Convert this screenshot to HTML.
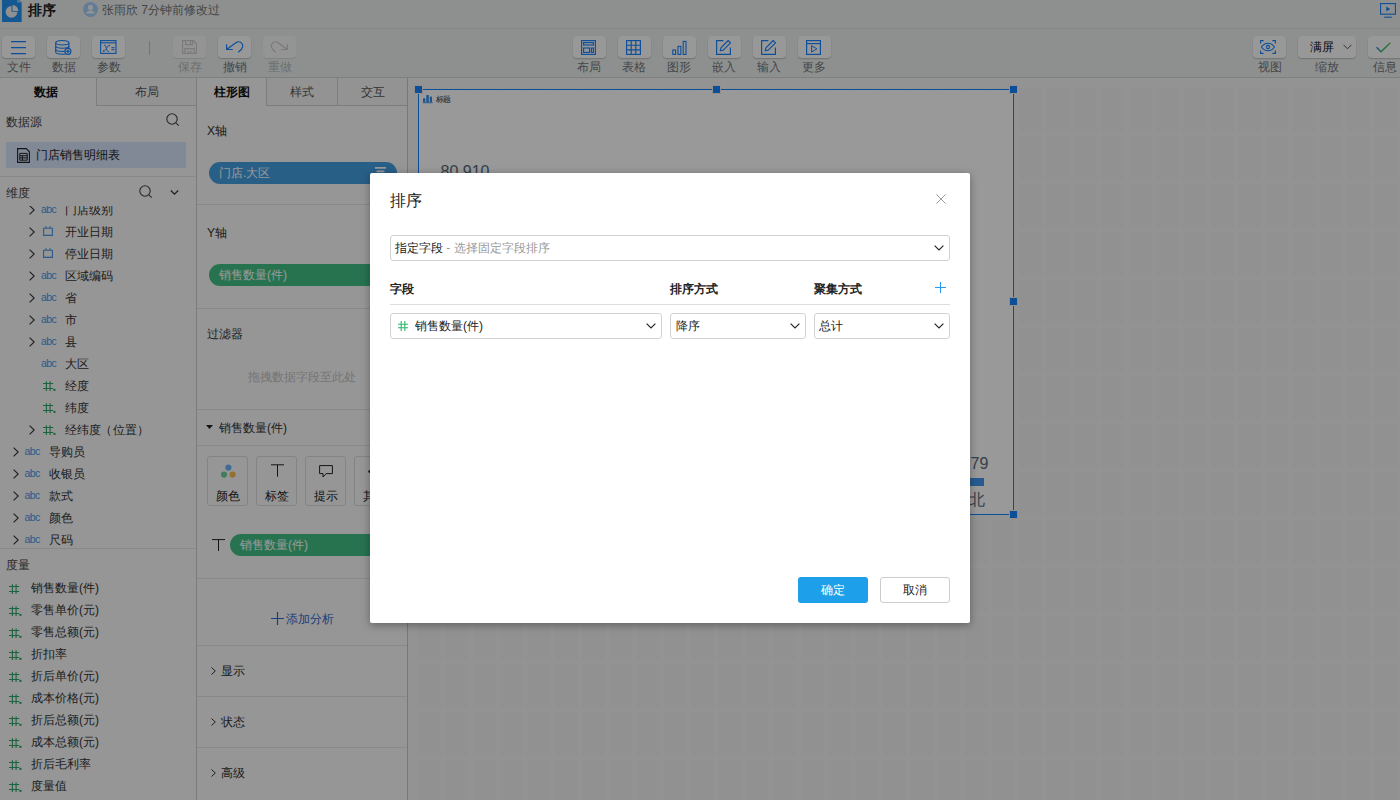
<!DOCTYPE html>
<html lang="zh">
<head>
<meta charset="utf-8">
<title>排序</title>
<style>
*{box-sizing:border-box;margin:0;padding:0}
html,body{width:1400px;height:800px;overflow:hidden}
body{font-family:"Liberation Sans",sans-serif;font-size:12px;color:#333;background:#f0f0f0;position:relative}
.abs{position:absolute}
svg{display:block;overflow:visible}
/* ---------- title bar ---------- */
#titlebar{position:absolute;left:0;top:0;width:1400px;height:29px;background:#edf1f0;border-bottom:1px solid #dadedd}
#title{position:absolute;left:28px;top:1px;font-size:14px;font-weight:bold;color:#222;line-height:18px}
#who{position:absolute;left:102px;top:1px;font-size:12px;color:#727272;line-height:18px}
/* ---------- toolbar ---------- */
#toolbar{position:absolute;left:0;top:29px;width:1400px;height:49px;background:#edf1f0;border-bottom:1px solid #d3d6d5}
.tb{position:absolute;top:7px;width:33px;height:22px;background:#fdfdfd;border-radius:4px;box-shadow:0 1px 1.5px rgba(0,0,0,.22)}
.tb.dis{background:#f5f7f6;box-shadow:0 1px 1px rgba(0,0,0,.10)}
.tb svg{position:absolute;left:9px;top:4px}
.tl{position:absolute;top:31px;width:45px;text-align:center;font-size:12px;line-height:14px;color:#757575}
.tl.dis{color:#b6b8b7}
/* ---------- panels ---------- */
#left{position:absolute;left:0;top:78px;width:197px;height:722px;background:#fafafa;border-right:1px solid #cfcfcf;overflow:hidden}
#mid{position:absolute;left:197px;top:78px;width:211px;height:722px;background:#fafafa;border-right:1px solid #c9c9c9;overflow:hidden}
.tab{position:absolute;top:0;height:28px;line-height:28px;text-align:center;font-size:12px;color:#555;background:#f6f6f6;border-bottom:1px solid #d0d0d0;border-left:1px solid #d0d0d0}
.tab.on{background:#fafafa;border-bottom:none;border-left:none;color:#111;font-weight:bold}
.hline{position:absolute;left:0;height:1px;background:#e4e4e4;width:100%}
.lbl{position:absolute;font-size:12px;line-height:16px;color:#333;white-space:nowrap}
.row{position:absolute;left:0;width:196px;height:22px;line-height:22px;font-size:12px;color:#333;white-space:nowrap}
.row .t{position:absolute;top:0}
.abc{position:absolute;top:-1px;font-size:10.5px;color:#4597ea;letter-spacing:-.55px}
.pill{position:absolute;height:22px;border-radius:11px;color:#fff;font-size:12px;line-height:22px;padding-left:10px;white-space:nowrap}
/* ---------- canvas ---------- */
#canvas{position:absolute;left:408px;top:78px;width:992px;height:722px;background:#f6f6f6;overflow:hidden}
#chart{position:absolute;left:10px;top:11px;width:596px;height:426px;background:#fff;border:1px solid #1682ff}
.hd{position:absolute;width:9px;height:9px;background:#1682ff;border:1px solid #f3efe6}
/* ---------- overlay + dialog ---------- */
#mask{position:absolute;left:0;top:0;width:1400px;height:800px;background:rgba(0,0,0,.4)}
#dlg{position:absolute;left:370px;top:173px;width:600px;height:450px;background:#fff;border-radius:2px;box-shadow:0 2px 8px rgba(0,0,0,.35)}
.sel{position:absolute;height:26px;border:1px solid #d2d2d2;border-radius:3px;background:#fff;font-size:12px;line-height:24px;color:#222;white-space:nowrap}
.sel svg{position:absolute;right:5px;top:8.6px}
.th{position:absolute;top:108px;font-size:12px;font-weight:bold;color:#222;line-height:16px}
.btn{position:absolute;top:404px;width:70px;height:26px;border-radius:3px;font-size:12px;line-height:27px;text-align:center}
</style>
</head>
<body>

<!-- ================= TITLE BAR ================= -->
<div id="titlebar">
  <svg class="abs" style="left:2.3px;top:-2px" width="19.7" height="24" viewBox="0 0 19.7 24">
    <path d="M0 0H15.2L19.7 4.5V24H0Z" fill="#2293f3"/>
    <path d="M15.2 0L19.7 4.5H15.2Z" fill="#8cc6f7"/>
    <path d="M9.5 7.9A5.9 5.9 0 1 0 15.4 13.8H9.5Z" fill="#f0f0f0"/>
    <path d="M10.5 7A5.9 5.9 0 0 1 16.4 12.9H10.5Z" fill="#f0f0f0"/>
  </svg>
  <div id="title">排序</div>
  <svg class="abs" style="left:83px;top:2px" width="15" height="15" viewBox="0 0 15 15">
    <circle cx="7.5" cy="7.5" r="7.5" fill="#a6cef6"/>
    <ellipse cx="7.5" cy="5.5" rx="2.5" ry="2.8" fill="#f2f7fc"/>
    <path d="M3.2 11.6C3.2 9.6 5.4 9.3 6.3 8.6H8.7C9.6 9.3 11.8 9.6 11.8 11.6Z" fill="#f2f7fc"/>
  </svg>
  <div id="who">张雨欣 7分钟前修改过</div>
  <svg class="abs" style="left:1380px;top:3px" width="16" height="15" viewBox="0 0 16 15" fill="none" stroke="#1682ff" stroke-width="1.1">
    <rect x=".6" y=".6" width="14.8" height="10.6"/>
    <path d="M6.3 3.4V8.4L10.2 5.9Z" fill="#1682ff" stroke="none"/>
    <path d="M4.2 14.2H11.8"/>
  </svg>
</div>

<!-- ================= TOOLBAR ================= -->
<div id="toolbar">
    <!-- left group -->
  <div class="tb" style="left:2px"><svg width="15" height="15" viewBox="0 0 15 15" stroke="#1682ff" stroke-width="1.2" fill="none"><path d="M0 1.6H15M0 7.6H15M0 13.6H15"/></svg></div>
  <div class="tl" style="left:-4px">文件</div>
  <div class="tb" style="left:47px"><svg width="17" height="15" viewBox="0 0 17 15" stroke="#1682ff" stroke-width="1.1" fill="none" style="left:7.9px;top:4px">
    <ellipse cx="7.3" cy="2.75" rx="6.6" ry="2.2"/>
    <path d="M.7 2.75V12.1C.7 13.3 3.6 14.3 7.3 14.3 8.4 14.3 9.4 14.2 10.3 14.05M13.9 2.75V8.2"/>
    <path d="M.7 6.1C.7 7.3 3.6 8.3 7.3 8.3S13.9 7.3 13.9 6.1M.7 9.3C.7 10.5 3.6 11.5 7.3 11.5 8.2 11.5 9 11.45 9.8 11.35"/>
    <circle cx="12.9" cy="11.4" r="3"/><path d="M11.2 11.4H14.6M12.9 9.7V13.1" stroke-width="1.2"/></svg></div>
  <div class="tl" style="left:41px">数据</div>
  <div class="tb" style="left:92px"><svg width="16.6" height="14" viewBox="0 0 16.6 14" stroke="#1682ff" stroke-width="1.1" fill="none" style="top:3.6px;left:8px">
    <rect x=".6" y=".6" width="15.4" height="12.8"/><path d="M.6 2.8H16"/>
    <path d="M3.3 11.2C4.7 11.3 5.6 9.7 6.4 8.4S8.2 5.3 9.5 5.5M4.2 5C5.6 4.9 6 7 6.4 8.4S7.4 12 8.8 11.7" stroke-width="1"/>
    <circle cx="3.5" cy="11" r=".75" fill="#1682ff" stroke="none"/><circle cx="9.4" cy="5.6" r=".75" fill="#1682ff" stroke="none"/>
    <path d="M11.4 7.7H14.6M11.4 9.7H14.6" stroke-width="1"/></svg></div>
  <div class="tl" style="left:86px">参数</div>
  <div class="abs" style="left:149px;top:12px;width:1px;height:14px;background:#bfc2c1"></div>
  <div class="tb dis" style="left:173px"><svg width="15" height="14" viewBox="0 0 15 14" stroke="#cacdcc" stroke-width="1.1" fill="none" style="top:4px">
    <path d="M.6 .6H11.2L14.4 3.8V13.4H.6Z"/><path d="M3.6 .6V4.6H10.6V.6M8.6 .8V4.4M2.8 13.4V8.6H12.2V13.4M6.2 10.6V13.4M8.6 10.6V13.4"/></svg></div>
  <div class="tl dis" style="left:167px">保存</div>
  <div class="tb" style="left:218px"><svg width="18" height="13" viewBox="0 0 18 13" stroke="#1682ff" stroke-width="1.2" fill="none" style="top:5px;left:8px">
    <path d="M.6 3.2V8.5H6.8M.6 8.5 9.9 1.7C11.6 .5 14.2 .6 15.6 2.1 17.6 4.2 17.2 7.8 12.3 11.3"/></svg></div>
  <div class="tl" style="left:212px">撤销</div>
  <div class="tb dis" style="left:263px"><svg width="18" height="13" viewBox="0 0 18 13" stroke="#cacdcc" stroke-width="1.2" fill="none" style="top:5px;left:7px">
    <path d="M17.4 3.2V8.5H11.2M17.4 8.5 8.1 1.7C6.4 .5 3.8 .6 2.4 2.1 .4 4.2 .8 7.8 5.7 11.3"/></svg></div>
  <div class="tl dis" style="left:257px">重做</div>

  <!-- centre group -->
  <div class="tb" style="left:573px"><svg width="15" height="15" viewBox="0 0 15 15" stroke="#1682ff" stroke-width="1.15" fill="none" style="left:8px">
    <rect x=".6" y=".6" width="13.8" height="13.8"/><rect x="2.6" y="2.6" width="9.8" height="2.4"/><rect x="2.6" y="8" width="6" height="4.4"/><rect x="10.4" y="8" width="2" height="4.4"/></svg></div>
  <div class="tl" style="left:566.25px">布局</div>
  <div class="tb" style="left:618px"><svg width="15" height="15" viewBox="0 0 15 15" stroke="#1682ff" stroke-width="1.15" fill="none" style="left:8px">
    <rect x=".6" y=".6" width="13.8" height="13.8"/><path d="M5.2 .6V14.4M9.8 .6V14.4M.6 5.2H14.4M.6 9.8H14.4"/></svg></div>
  <div class="tl" style="left:611.25px">表格</div>
  <div class="tb" style="left:663px"><svg width="15" height="15" viewBox="0 0 15 15" stroke="#1682ff" stroke-width="1.1" fill="none">
    <rect x=".8" y="10" width="2.8" height="4.4"/><rect x="6" y="6.4" width="2.8" height="8"/><rect x="11.2" y="1.4" width="2.8" height="13"/></svg></div>
  <div class="tl" style="left:656.25px">图形</div>
  <div class="tb" style="left:708px"><svg width="15" height="15" viewBox="0 0 15 15" stroke="#1682ff" stroke-width="1.15" fill="none" style="left:8px">
    <path d="M7.4 .6H.6V14.4H14.4V7.6"/><path d="M12.2 .5 14.5 2.8 7.2 10.1 4.2 10.8 4.9 7.8Z" stroke-linejoin="round"/></svg></div>
  <div class="tl" style="left:701.25px">嵌入</div>
  <div class="tb" style="left:753px"><svg width="15" height="15" viewBox="0 0 15 15" stroke="#1682ff" stroke-width="1.15" fill="none" style="left:8px">
    <path d="M7.4 .6H.6V14.4H14.4V7.6"/><path d="M12.2 .5 14.5 2.8 7.2 10.1 4.2 10.8 4.9 7.8Z" stroke-linejoin="round"/></svg></div>
  <div class="tl" style="left:746.25px">输入</div>
  <div class="tb" style="left:798px"><svg width="15" height="15" viewBox="0 0 15 15" stroke="#1682ff" stroke-width="1.15" fill="none" style="left:8px">
    <rect x=".6" y=".6" width="13.8" height="13.8"/><path d="M.6 3.6H14.4"/><path d="M5.6 5.7V12L10.9 8.85Z" stroke-width="1"/></svg></div>
  <div class="tl" style="left:791.25px">更多</div>

  <!-- right group -->
  <div class="tb" style="left:1253px"><svg width="16" height="14" viewBox="0 0 16 14" stroke="#1682ff" stroke-width="1.1" fill="none" style="left:6.8px;top:4px">
    <path d="M.6 3.4V.6H3.6M12.4 .6H15.4V3.4M15.4 10.6V13.4H12.4M3.6 13.4H.6V10.6"/>
    <path d="M1.4 7C3.2 4.4 5.4 3.2 8 3.2S12.8 4.4 14.6 7C12.8 9.6 10.6 10.8 8 10.8S3.2 9.6 1.4 7Z"/><rect x="6.6" y="5.4" width="2.8" height="3.2" rx="1"/></svg></div>
  <div class="tl" style="left:1247.15px">视图</div>
  <div class="tb" style="left:1298px;width:58px"><div class="abs" style="left:12px;top:0;line-height:22px;font-size:12px;color:#111">满屏</div>
    <svg width="9" height="6" viewBox="0 0 9 6" stroke="#555" stroke-width="1" fill="none" style="left:45px;top:8.2px"><path d="M.5 .8 4.5 4.8 8.5 .8"/></svg></div>
  <div class="tl" style="left:1304.65px">缩放</div>
  <div class="tb" style="left:1368px;width:34px"><svg width="15" height="11" viewBox="0 0 15 11" fill="none" stroke-width="1.3" style="left:8px;top:6px">
    <defs><linearGradient id="ck" x1="0" y1="0" x2="1" y2="0"><stop offset="0" stop-color="#2b7fe0"/><stop offset=".3" stop-color="#30b070"/><stop offset=".75" stop-color="#3dbb5c"/><stop offset="1" stop-color="#6cc64a"/></linearGradient></defs>
    <path d="M.6 5.2 5 9.8 14.4 .8" stroke="url(#ck)"/></svg></div>
  <div class="tl" style="left:1362.15px">信息</div>

</div>

<!-- ================= LEFT PANEL ================= -->
<div id="left">
  <div class="tab on" style="left:0;width:96px;padding-right:5px">数据</div>
  <div class="tab" style="left:96px;width:100px;padding-right:0">布局</div>
  <div class="lbl" style="left:6px;top:35.5px;color:#444">数据源</div>
  <svg class="abs" style="left:165.5px;top:35.3px" width="14" height="14" viewBox="0 0 14 14" fill="none" stroke="#444" stroke-width="1.1"><circle cx="6" cy="6" r="5.2"/><path d="M9.8 9.8 12.8 12.6"/></svg>
  <div class="abs" style="left:6px;top:64px;width:180px;height:26px;background:#d6e4f8"></div>
  <svg class="abs" style="left:17px;top:70px" width="13" height="15" viewBox="0 0 13 15" fill="none" stroke="#222" stroke-width="1.1"><path d="M.6 .6H9.2L12.4 3.8V14.4H.6Z"/><path d="M2.8 5.4H10.2V12.2H2.8ZM2.8 7.7H10.2M2.8 9.9H10.2M5.4 7.7V12.2" stroke-width="1"/></svg>
  <div class="lbl" style="left:36px;top:69px;color:#222">门店销售明细表</div>
  <div class="hline" style="top:98px;width:196px"></div>
  <div class="lbl" style="left:6px;top:106.5px;color:#444">维度</div>
  <svg class="abs" style="left:139.3px;top:106.5px" width="14" height="14" viewBox="0 0 14 14" fill="none" stroke="#444" stroke-width="1.1"><circle cx="6" cy="6" r="5.2"/><path d="M9.8 9.8 12.8 12.6"/></svg>
  <svg class="abs" style="left:170.3px;top:112px" width="9" height="5" viewBox="0 0 10 6" fill="none" stroke="#333" stroke-width="1.4"><path d="M.6 .6 5 5 9.4 .6"/></svg>
  <div class="abs" style="left:0;top:128px;width:196px;height:342px;overflow:hidden">
  <div class="row" style="top:-7.5px"><svg class="abs" style="left:29px;top:6.5px" width="6" height="10" viewBox="0 0 6 10" fill="none" stroke="#333" stroke-width="1.1"><path d="M.6 .6 5.2 5 .6 9.4"/></svg><span class="abc" style="left:41px">abc</span><span class="t" style="left:65px">门店级别</span></div>
  <div class="row" style="top:14.5px"><svg class="abs" style="left:29px;top:6.5px" width="6" height="10" viewBox="0 0 6 10" fill="none" stroke="#333" stroke-width="1.1"><path d="M.6 .6 5.2 5 .6 9.4"/></svg><svg class="abs" style="left:43px;top:5px" width="10" height="10" viewBox="0 0 10 10" fill="none" stroke="#4597ea" stroke-width="1.1"><path d="M.6 2.2H9.4V9.4H.6ZM3 .2V2.2M7 .2V2.2"/></svg><span class="t" style="left:65px">开业日期</span></div>
  <div class="row" style="top:36.5px"><svg class="abs" style="left:29px;top:6.5px" width="6" height="10" viewBox="0 0 6 10" fill="none" stroke="#333" stroke-width="1.1"><path d="M.6 .6 5.2 5 .6 9.4"/></svg><svg class="abs" style="left:43px;top:5px" width="10" height="10" viewBox="0 0 10 10" fill="none" stroke="#4597ea" stroke-width="1.1"><path d="M.6 2.2H9.4V9.4H.6ZM3 .2V2.2M7 .2V2.2"/></svg><span class="t" style="left:65px">停业日期</span></div>
  <div class="row" style="top:58.5px"><svg class="abs" style="left:29px;top:6.5px" width="6" height="10" viewBox="0 0 6 10" fill="none" stroke="#333" stroke-width="1.1"><path d="M.6 .6 5.2 5 .6 9.4"/></svg><span class="abc" style="left:41px">abc</span><span class="t" style="left:65px">区域编码</span></div>
  <div class="row" style="top:80.5px"><svg class="abs" style="left:29px;top:6.5px" width="6" height="10" viewBox="0 0 6 10" fill="none" stroke="#333" stroke-width="1.1"><path d="M.6 .6 5.2 5 .6 9.4"/></svg><span class="abc" style="left:41px">abc</span><span class="t" style="left:65px">省</span></div>
  <div class="row" style="top:102.5px"><svg class="abs" style="left:29px;top:6.5px" width="6" height="10" viewBox="0 0 6 10" fill="none" stroke="#333" stroke-width="1.1"><path d="M.6 .6 5.2 5 .6 9.4"/></svg><span class="abc" style="left:41px">abc</span><span class="t" style="left:65px">市</span></div>
  <div class="row" style="top:124.5px"><svg class="abs" style="left:29px;top:6.5px" width="6" height="10" viewBox="0 0 6 10" fill="none" stroke="#333" stroke-width="1.1"><path d="M.6 .6 5.2 5 .6 9.4"/></svg><span class="abc" style="left:41px">abc</span><span class="t" style="left:65px">县</span></div>
  <div class="row" style="top:146.5px"><span class="abc" style="left:41px">abc</span><span class="t" style="left:65px">大区</span></div>
  <div class="row" style="top:168.5px"><svg class="abs" style="left:43.3px;top:6.2px" width="12.6" height="10" viewBox="0 0 12.6 10" fill="none" stroke="#2fa56a" stroke-width="1.1"><path d="M3.4 .2V9.9M7.1 .2V9.9M0 2.5H10.2M0 7.5H10.2"/><rect x="10.4" y="7.9" width="2.1" height="2" fill="#2fa56a" stroke="none"/></svg><span class="t" style="left:65px">经度</span></div>
  <div class="row" style="top:190.5px"><svg class="abs" style="left:43.3px;top:6.2px" width="12.6" height="10" viewBox="0 0 12.6 10" fill="none" stroke="#2fa56a" stroke-width="1.1"><path d="M3.4 .2V9.9M7.1 .2V9.9M0 2.5H10.2M0 7.5H10.2"/><rect x="10.4" y="7.9" width="2.1" height="2" fill="#2fa56a" stroke="none"/></svg><span class="t" style="left:65px">纬度</span></div>
  <div class="row" style="top:212.5px"><svg class="abs" style="left:29px;top:6.5px" width="6" height="10" viewBox="0 0 6 10" fill="none" stroke="#333" stroke-width="1.1"><path d="M.6 .6 5.2 5 .6 9.4"/></svg><svg class="abs" style="left:43.3px;top:6.2px" width="12.6" height="10" viewBox="0 0 12.6 10" fill="none" stroke="#2fa56a" stroke-width="1.1"><path d="M3.4 .2V9.9M7.1 .2V9.9M0 2.5H10.2M0 7.5H10.2"/><rect x="10.4" y="7.9" width="2.1" height="2" fill="#2fa56a" stroke="none"/></svg><span class="t" style="left:65px">经纬度<span style="position:relative;left:-1.5px">（</span>位置<span style="margin-left:0px">）</span></span></div>
  <div class="row" style="top:234.5px"><svg class="abs" style="left:13px;top:6.5px" width="6" height="10" viewBox="0 0 6 10" fill="none" stroke="#333" stroke-width="1.1"><path d="M.6 .6 5.2 5 .6 9.4"/></svg><span class="abc" style="left:24.5px">abc</span><span class="t" style="left:49px">导购员</span></div>
  <div class="row" style="top:256.5px"><svg class="abs" style="left:13px;top:6.5px" width="6" height="10" viewBox="0 0 6 10" fill="none" stroke="#333" stroke-width="1.1"><path d="M.6 .6 5.2 5 .6 9.4"/></svg><span class="abc" style="left:24.5px">abc</span><span class="t" style="left:49px">收银员</span></div>
  <div class="row" style="top:278.5px"><svg class="abs" style="left:13px;top:6.5px" width="6" height="10" viewBox="0 0 6 10" fill="none" stroke="#333" stroke-width="1.1"><path d="M.6 .6 5.2 5 .6 9.4"/></svg><span class="abc" style="left:24.5px">abc</span><span class="t" style="left:49px">款式</span></div>
  <div class="row" style="top:300.5px"><svg class="abs" style="left:13px;top:6.5px" width="6" height="10" viewBox="0 0 6 10" fill="none" stroke="#333" stroke-width="1.1"><path d="M.6 .6 5.2 5 .6 9.4"/></svg><span class="abc" style="left:24.5px">abc</span><span class="t" style="left:49px">颜色</span></div>
  <div class="row" style="top:322.5px"><svg class="abs" style="left:13px;top:6.5px" width="6" height="10" viewBox="0 0 6 10" fill="none" stroke="#333" stroke-width="1.1"><path d="M.6 .6 5.2 5 .6 9.4"/></svg><span class="abc" style="left:24.5px">abc</span><span class="t" style="left:49px">尺码</span></div>
  </div>
  <div class="hline" style="top:470px;width:196px"></div>
  <div class="lbl" style="left:6px;top:478.5px;color:#444">度量</div>
  <div class="row" style="top:498.5px"><svg class="abs" style="left:8.8px;top:7px" width="12.6" height="10" viewBox="0 0 12.6 10" fill="none" stroke="#2fa56a" stroke-width="1.1"><path d="M3.4 .2V9.9M7.1 .2V9.9M0 2.5H10.2M0 7.5H10.2"/></svg><span class="t" style="left:31px">销售数量(件)</span></div>
  <div class="row" style="top:520.5px"><svg class="abs" style="left:8.8px;top:7px" width="12.6" height="10" viewBox="0 0 12.6 10" fill="none" stroke="#2fa56a" stroke-width="1.1"><path d="M3.4 .2V9.9M7.1 .2V9.9M0 2.5H10.2M0 7.5H10.2"/><rect x="10.4" y="7.9" width="2.1" height="2" fill="#2fa56a" stroke="none"/></svg><span class="t" style="left:31px">零售单价(元)</span></div>
  <div class="row" style="top:542.5px"><svg class="abs" style="left:8.8px;top:7px" width="12.6" height="10" viewBox="0 0 12.6 10" fill="none" stroke="#2fa56a" stroke-width="1.1"><path d="M3.4 .2V9.9M7.1 .2V9.9M0 2.5H10.2M0 7.5H10.2"/><rect x="10.4" y="7.9" width="2.1" height="2" fill="#2fa56a" stroke="none"/></svg><span class="t" style="left:31px">零售总额(元)</span></div>
  <div class="row" style="top:564.5px"><svg class="abs" style="left:8.8px;top:7px" width="12.6" height="10" viewBox="0 0 12.6 10" fill="none" stroke="#2fa56a" stroke-width="1.1"><path d="M3.4 .2V9.9M7.1 .2V9.9M0 2.5H10.2M0 7.5H10.2"/><rect x="10.4" y="7.9" width="2.1" height="2" fill="#2fa56a" stroke="none"/></svg><span class="t" style="left:31px">折扣率</span></div>
  <div class="row" style="top:586.5px"><svg class="abs" style="left:8.8px;top:7px" width="12.6" height="10" viewBox="0 0 12.6 10" fill="none" stroke="#2fa56a" stroke-width="1.1"><path d="M3.4 .2V9.9M7.1 .2V9.9M0 2.5H10.2M0 7.5H10.2"/><rect x="10.4" y="7.9" width="2.1" height="2" fill="#2fa56a" stroke="none"/></svg><span class="t" style="left:31px">折后单价(元)</span></div>
  <div class="row" style="top:608.5px"><svg class="abs" style="left:8.8px;top:7px" width="12.6" height="10" viewBox="0 0 12.6 10" fill="none" stroke="#2fa56a" stroke-width="1.1"><path d="M3.4 .2V9.9M7.1 .2V9.9M0 2.5H10.2M0 7.5H10.2"/><rect x="10.4" y="7.9" width="2.1" height="2" fill="#2fa56a" stroke="none"/></svg><span class="t" style="left:31px">成本价格(元)</span></div>
  <div class="row" style="top:630.5px"><svg class="abs" style="left:8.8px;top:7px" width="12.6" height="10" viewBox="0 0 12.6 10" fill="none" stroke="#2fa56a" stroke-width="1.1"><path d="M3.4 .2V9.9M7.1 .2V9.9M0 2.5H10.2M0 7.5H10.2"/><rect x="10.4" y="7.9" width="2.1" height="2" fill="#2fa56a" stroke="none"/></svg><span class="t" style="left:31px">折后总额(元)</span></div>
  <div class="row" style="top:652.5px"><svg class="abs" style="left:8.8px;top:7px" width="12.6" height="10" viewBox="0 0 12.6 10" fill="none" stroke="#2fa56a" stroke-width="1.1"><path d="M3.4 .2V9.9M7.1 .2V9.9M0 2.5H10.2M0 7.5H10.2"/><rect x="10.4" y="7.9" width="2.1" height="2" fill="#2fa56a" stroke="none"/></svg><span class="t" style="left:31px">成本总额(元)</span></div>
  <div class="row" style="top:674.5px"><svg class="abs" style="left:8.8px;top:7px" width="12.6" height="10" viewBox="0 0 12.6 10" fill="none" stroke="#2fa56a" stroke-width="1.1"><path d="M3.4 .2V9.9M7.1 .2V9.9M0 2.5H10.2M0 7.5H10.2"/><rect x="10.4" y="7.9" width="2.1" height="2" fill="#2fa56a" stroke="none"/></svg><span class="t" style="left:31px">折后毛利率</span></div>
  <div class="row" style="top:696.5px"><svg class="abs" style="left:8.8px;top:7px" width="12.6" height="10" viewBox="0 0 12.6 10" fill="none" stroke="#2fa56a" stroke-width="1.1"><path d="M3.4 .2V9.9M7.1 .2V9.9M0 2.5H10.2M0 7.5H10.2"/><rect x="10.4" y="7.9" width="2.1" height="2" fill="#2fa56a" stroke="none"/></svg><span class="t" style="left:31px">度量值</span></div>
</div>

<!-- ================= MIDDLE PANEL ================= -->
<div id="mid">
  <div class="tab on" style="left:0;width:69px">柱形图</div>
  <div class="tab" style="left:69px;width:71px">样式</div>
  <div class="tab" style="left:140px;width:70px">交互</div>
  <div class="lbl" style="left:10px;top:44.5px">X轴</div>
  <div class="pill" style="left:12px;top:84px;width:188px;background:#449ee1">门店.大区<svg class="abs" style="left:166px;top:5px" width="11" height="12" viewBox="0 0 11 12" stroke="#fff" stroke-width="1.7" fill="none"><path d="M0 .9H11M1.6 4.4H9.4M3.2 7.9H7.8"/></svg></div>
  <div class="hline" style="top:126px"></div>
  <div class="lbl" style="left:10px;top:146.5px">Y轴</div>
  <div class="pill" style="left:12px;top:186px;width:188px;background:#41c085">销售数量(件)</div>
  <div class="hline" style="top:230px"></div>
  <div class="lbl" style="left:10px;top:247.5px">过滤器</div>
  <div class="lbl" style="left:51px;top:290.5px;color:#c4c4c4">拖拽数据字段至此处</div>
  <div class="hline" style="top:331px"></div>
  <svg class="abs" style="left:9px;top:347px" width="7" height="4" viewBox="0 0 7 4"><path d="M0 0H7L3.5 4Z" fill="#222"/></svg>
  <div class="lbl" style="left:22px;top:342px">销售数量(件)</div>
  <div class="hline" style="top:366.5px"></div>
  <div class="abs" style="left:10px;top:378px;width:41px;height:50px;border:1px solid #dcdcdc;border-radius:3px;background:#fbfbfb"><svg class="abs" style="left:12px;top:7px" width="16" height="15" viewBox="0 0 16 15"><circle cx="8.4" cy="3.6" r="3.1" fill="#6ab4fa"/><circle cx="4" cy="10.6" r="3.1" fill="#6fcf9d"/><circle cx="12.6" cy="10.6" r="3.1" fill="#f7bd55"/></svg><div class="abs" style="left:0;top:30.5px;width:39px;text-align:center;line-height:16px;color:#222">颜色</div></div>
  <div class="abs" style="left:59px;top:378px;width:41px;height:50px;border:1px solid #dcdcdc;border-radius:3px;background:#fbfbfb"><svg class="abs" style="left:14px;top:7px" width="13" height="13" viewBox="0 0 13 13" stroke="#222" stroke-width="1" fill="none"><path d="M0 .8H13M6.5 .8V12.6"/></svg><div class="abs" style="left:0;top:30.5px;width:39px;text-align:center;line-height:16px;color:#222">标签</div></div>
  <div class="abs" style="left:108px;top:378px;width:41px;height:50px;border:1px solid #dcdcdc;border-radius:3px;background:#fbfbfb"><svg class="abs" style="left:13px;top:8px" width="14" height="13" viewBox="0 0 14 13" stroke="#222" stroke-width="1" fill="none"><path d="M.6 .6H13.4V8.6H7.2L4 12V8.6H.6Z" stroke-linejoin="round"/></svg><div class="abs" style="left:0;top:30.5px;width:39px;text-align:center;line-height:16px;color:#222">提示</div></div>
  <div class="abs" style="left:157px;top:378px;width:41px;height:50px;border:1px solid #dcdcdc;border-radius:3px;background:#fbfbfb"><svg class="abs" style="left:13px;top:13px" width="14" height="3" viewBox="0 0 14 3" fill="#222"><circle cx="1.5" cy="1.5" r="1.2"/><circle cx="7" cy="1.5" r="1.2"/><circle cx="12.5" cy="1.5" r="1.2"/></svg><div class="abs" style="left:0;top:30.5px;width:39px;text-align:center;line-height:16px;color:#222">其他</div></div>
  <svg class="abs" style="left:15px;top:460.5px" width="13" height="12" viewBox="0 0 13 12" stroke="#222" stroke-width="1" fill="none"><path d="M0 .6H13M6.5 .6V12"/></svg>
  <div class="pill" style="left:33px;top:456px;width:170px;background:#41c085">销售数量(件)</div>
  <div class="hline" style="top:500px"></div>
  <svg class="abs" style="left:74px;top:533.5px" width="13" height="13" viewBox="0 0 13 13" stroke="#2d6bd0" stroke-width="1.2" fill="none"><path d="M0 6.5H13M6.5 0V13"/></svg>
  <div class="lbl" style="left:89px;top:532.5px;color:#2d6bd0">添加分析</div>
  <div class="hline" style="top:567px"></div>
  <svg class="abs" style="left:14px;top:588.5px" width="5" height="8" viewBox="0 0 5 8" stroke="#333" stroke-width="1" fill="none"><path d="M.5 .5 4.3 4 .5 7.5"/></svg>
  <div class="lbl" style="left:24px;top:584.5px">显示</div>
  <svg class="abs" style="left:14px;top:639.5px" width="5" height="8" viewBox="0 0 5 8" stroke="#333" stroke-width="1" fill="none"><path d="M.5 .5 4.3 4 .5 7.5"/></svg>
  <div class="lbl" style="left:24px;top:635.5px">状态</div>
  <svg class="abs" style="left:14px;top:690.5px" width="5" height="8" viewBox="0 0 5 8" stroke="#333" stroke-width="1" fill="none"><path d="M.5 .5 4.3 4 .5 7.5"/></svg>
  <div class="lbl" style="left:24px;top:686.5px">高级</div>
  <div class="hline" style="top:618px"></div>
  <div class="hline" style="top:669px"></div>
</div>

<!-- ================= CANVAS ================= -->
<div id="canvas">
  <div class="abs" style="left:10px;top:10px;width:982px;height:712px;background:repeating-linear-gradient(to right,#f2f2f2 0,#f2f2f2 23px,#f6f6f6 23px,#f6f6f6 27.333px)"></div>
  <div class="abs" style="left:0;top:10px;width:992px;height:712px;background:repeating-linear-gradient(to bottom,transparent 0,transparent 43.5px,#f6f6f6 43.5px,#f6f6f6 48px)"></div>
  <div id="chart"><svg class="abs" style="left:4px;top:5px" width="9.6" height="8.2" viewBox="0 0 10 9" preserveAspectRatio="none" fill="#2f8ff0"><rect x="0" y="3.6" width="2.4" height="4.4"/><rect x="3.4" y="0" width="2.6" height="8"/><rect x="7" y="1.8" width="2.4" height="6.2"/><rect x="0" y="8" width="10" height="1"/></svg><div class="abs" style="left:16.5px;top:3.5px;font-size:7.5px;line-height:12px;color:#333;letter-spacing:-.2px;white-space:nowrap">标题</div><div class="abs" style="left:21.5px;top:72.5px;font-size:16px;line-height:18px;color:#5a6b7c;white-space:nowrap">80,910</div><div class="abs" style="left:519.3px;top:365px;width:50px;text-align:right;font-size:16px;line-height:18px;color:#5a6b7c;white-space:nowrap">38,279</div><div class="abs" style="left:527px;top:388px;width:38px;height:8px;background:#4098f0"></div><div class="abs" style="left:525.9px;top:400.5px;width:40px;text-align:right;font-size:16px;line-height:18px;color:#5a6b7c;white-space:nowrap">西北</div></div>
  <div class="hd" style="left:6px;top:7px"></div>
  <div class="hd" style="left:6px;top:219px"></div>
  <div class="hd" style="left:6px;top:432px"></div>
  <div class="hd" style="left:304px;top:7px"></div>
  <div class="hd" style="left:304px;top:432px"></div>
  <div class="hd" style="left:601px;top:7px"></div>
  <div class="hd" style="left:601px;top:219px"></div>
  <div class="hd" style="left:601px;top:432px"></div>
</div>

<!-- ================= MASK + DIALOG ================= -->
<div id="mask"></div>
<div id="dlg">
  <div class="abs" style="left:20px;top:17px;font-size:16px;line-height:22px;color:#222">排序</div>
  <svg class="abs" style="left:566px;top:21px" width="10" height="10" viewBox="0 0 10 10" stroke="#9a9a9a" stroke-width="1" fill="none"><path d="M.4 .4 9.6 9.6M9.6 .4 .4 9.6"/></svg>
  <div class="sel" style="left:20px;top:62px;width:560px;padding-left:4px">指定字段<span style="color:#999"> - 选择固定字段排序</span><svg width="10" height="6" viewBox="0 0 10 6" stroke="#222" stroke-width="1.15" fill="none"><path d="M.6 .7 5 5 9.4 .7"/></svg></div>
  <div class="th" style="left:20px">字段</div>
  <div class="th" style="left:300px">排序方式</div>
  <div class="th" style="left:444px">聚集方式</div>
  <svg class="abs" style="left:564.5px;top:108.7px" width="11" height="11" viewBox="0 0 11 11" stroke="#2a9bf5" stroke-width="1.1" fill="none"><path d="M0 5.5H11M5.5 0V11"/></svg>
  <div class="abs" style="left:20px;top:131px;width:560px;height:1px;background:#ddd"></div>
  <div class="sel" style="left:20px;top:140px;width:271.5px;padding-left:24px"><svg style="left:7px;right:auto;top:7px" width="10" height="10" viewBox="0 0 10 10" stroke="#2fb56a" stroke-width="1.1" fill="none"><path d="M3.2 0V10M6.8 0V10M0 3.2H10M0 6.8H10"/></svg>销售数量(件)<svg width="10" height="6" viewBox="0 0 10 6" stroke="#222" stroke-width="1.15" fill="none"><path d="M.6 .7 5 5 9.4 .7"/></svg></div>
  <div class="sel" style="left:300px;top:140px;width:135.5px;padding-left:4.5px">降序<svg width="10" height="6" viewBox="0 0 10 6" stroke="#222" stroke-width="1.15" fill="none"><path d="M.6 .7 5 5 9.4 .7"/></svg></div>
  <div class="sel" style="left:444px;top:140px;width:136px;padding-left:4px">总计<svg width="10" height="6" viewBox="0 0 10 6" stroke="#222" stroke-width="1.15" fill="none"><path d="M.6 .7 5 5 9.4 .7"/></svg></div>
  <div class="btn" style="left:428px;background:#1e9fe9;color:#fff">确定</div>
  <div class="btn" style="left:510px;background:#fff;border:1px solid #ccc;color:#222;line-height:25px">取消</div>
</div>

</body>
</html>
